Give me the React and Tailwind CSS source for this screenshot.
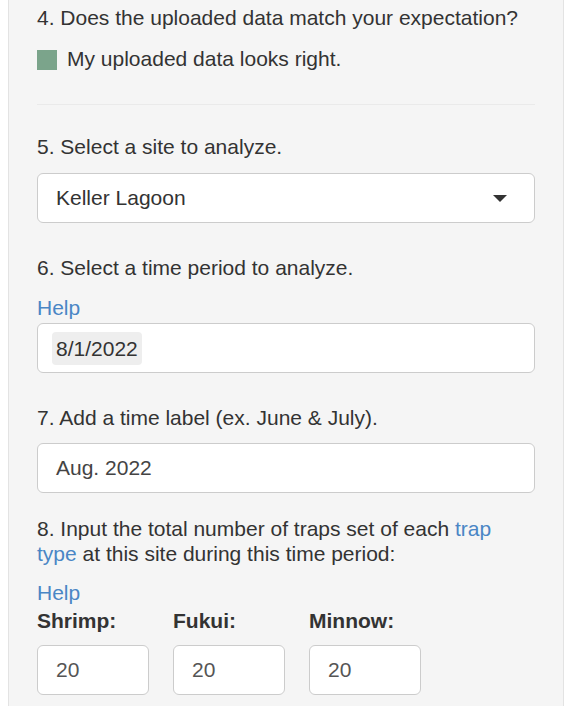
import React from "react";

function Box({ children, className = "" }) {
  return (
    <div
      className={
        "h-[50px] bg-white border border-[#cccccc] rounded-[6px] flex items-center " +
        className
      }
    >
      {children}
    </div>
  );
}

export default function App() {
  return (
    <div className="min-h-screen bg-white pl-2 pr-[7px] font-['Liberation_Sans',Arial,sans-serif] text-[21px] text-[#333333]">
      <div className="bg-[#f5f5f5] border-x border-[#e3e3e3] px-[28px] pt-[3px] pb-[40px] flex flex-col">
        <p className="leading-[30px]">4. Does the uploaded data match your expectation?</p>

        <div className="mt-[11px] flex items-start gap-[10px]">
          <span className="mt-[6px] w-[20px] h-[20px] bg-[#7ba48b] shrink-0" />
          <span className="leading-[30px]">My uploaded data looks right.</span>
        </div>

        <div className="mt-[30px] border-t border-[#eaeaea]" />

        <p className="mt-[27px] leading-[30px]">5. Select a site to analyze.</p>
        <Box className="mt-[11px] justify-between pl-[18px] pr-[27px]">
          <span className="leading-[30px] text-[#333333]">Keller Lagoon</span>
          <svg width="14" height="7" viewBox="0 0 14 7" className="mt-[1px]">
            <polygon points="0,0 14,0 7,7" fill="#333333" />
          </svg>
        </Box>

        <p className="mt-[30px] leading-[30px]">6. Select a time period to analyze.</p>
        <p className="mt-[10px] leading-[30px] text-[#4a86c5]">Help</p>
        <Box className="pl-[14px]">
          <span className="px-[4px] py-[4px] leading-[25px] rounded-[4px] bg-[#eeeeee] text-[#333333]">
            8/1/2022
          </span>
        </Box>

        <p className="mt-[30px] leading-[30px]">7. Add a time label (ex. June &amp; July).</p>
        <Box className="mt-[10px] pl-[18px]">
          <span className="leading-[30px] text-[#444444]">Aug. 2022</span>
        </Box>

        <p className="mt-[23px] leading-[25px]">
          8. Input the total number of traps set of each{" "}
          <span className="text-[#4a86c5]">trap type</span> at this site during this time period:
        </p>
        <p className="mt-[13px] leading-[28px] text-[#4a86c5]">Help</p>

        <div className="flex gap-[24px]">
          {["Shrimp:", "Fukui:", "Minnow:"].map((l) => (
            <div key={l} className="w-[112px] flex flex-col">
              <span className="leading-[28px] font-bold">{l}</span>
              <Box className="mt-[10px] pl-[18px]">
                <span className="leading-[30px] text-[#555555]">20</span>
              </Box>
            </div>
          ))}
        </div>
      </div>
    </div>
  );
}
